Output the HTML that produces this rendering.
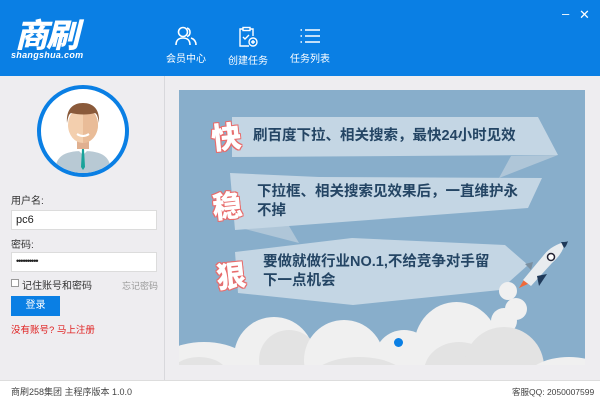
<!DOCTYPE html>
<html><head><meta charset="utf-8"><style>
*{margin:0;padding:0;box-sizing:border-box}
body{width:600px;height:405px;overflow:hidden;background:#eeedf0;font-family:"Liberation Sans","Noto Sans CJK SC",sans-serif;position:relative;font-size:12px}
.hdr{position:absolute;left:0;top:0;width:600px;height:76px;background:#0a7fe4}
.logo{position:absolute;left:15px;top:14px;color:#fff;font-size:33px;font-weight:900;font-style:italic;letter-spacing:-2px;line-height:38px;font-family:"Noto Sans CJK SC",sans-serif}
.logo2{position:absolute;left:11px;top:50px;color:#fff;font-size:9px;font-style:italic;font-weight:bold;letter-spacing:0.3px}
.nav{position:absolute;top:26px;width:60px;text-align:center;color:#fff;font-size:10px;white-space:nowrap}
.nav svg{display:block;margin:0 auto 4px}
.wc{position:absolute;color:#fff;font-size:13px}
.left{position:absolute;left:0;top:76px;width:165px;height:304px;border-right:1px solid #d8d8dc}
.av{position:absolute;left:37px;top:9px;width:92px;height:92px;border-radius:50%;border:4px solid #0a7fe4;background:#fff;overflow:hidden}
.lbl{position:absolute;left:11px;font-size:10px;color:#333;white-space:nowrap}
.inp{position:absolute;left:11px;width:146px;height:20px;background:#fff;border:1px solid #dcdcdc;font-size:11px;padding:3px 4px;color:#222}
.btn{position:absolute;left:11px;width:49px;height:20px;background:#0a7fe4;color:#fff;font-size:10px;text-align:center;line-height:20px}
.ban{position:absolute;left:179px;top:90px;width:406px;height:275px;background:#88aecb;overflow:hidden}
.rib{position:absolute;left:0;top:0;width:406px;height:275px;background:#c4d6e4}
.big{position:absolute;font-size:30px;font-weight:900;color:#fff;font-family:"Noto Sans CJK SC",sans-serif;line-height:32px;text-shadow:1px 0 #e76d6d,-1px 0 #e76d6d,0 1px #e76d6d,0 -1px #e76d6d,1px 1px #e76d6d,-1px -1px #e76d6d,1px -1px #e76d6d,-1px 1px #e76d6d;transform:rotate(-6deg)}
.t{position:absolute;color:#244564;font-size:14.5px;font-weight:bold;line-height:19px;white-space:nowrap}
.foot{position:absolute;left:0;top:380px;width:600px;height:25px;background:#fff;border-top:1px solid #ddd;font-size:9px;color:#444;line-height:22px;white-space:nowrap}
.cl{position:absolute;border-radius:50%;background:#f0f0f0}
.cd{position:absolute;border-radius:50%;background:#e3e3e3}
.cg{position:absolute;left:0;top:12px;width:406px;height:275px}
</style></head><body>
<div class="hdr">
<div class="logo">商刷</div>
<div class="logo2">shangshua.com</div>
<div class="nav" style="left:156px"><svg width="22" height="20" viewBox="0 0 22 20" fill="none" stroke="#fff" stroke-width="1.6"><circle cx="8" cy="6" r="4.5"/><path d="M1 19c0-5 3-7 7-7s7 2 7 7"/><path d="M12 2a4.5 4.5 0 0 1 0 8.5M16 12c3 1 5 3 5 7"/></svg>会员中心</div>
<div class="nav" style="left:218px"><svg width="22" height="22" viewBox="0 0 22 22" fill="none" stroke="#fff" stroke-width="1.4"><path d="M6 3H3v17h9M13 3h3v7"/><rect x="6" y="1.5" width="7" height="3"/><path d="M6 11l2 2 4-4"/><circle cx="16" cy="16" r="4"/><path d="M16 14v4M14 16h4"/></svg>创建任务</div>
<div class="nav" style="left:280px"><svg width="22" height="20" viewBox="0 0 22 20" fill="none" stroke="#fff" stroke-width="1.6"><path d="M6 4h15M6 10h15M6 16h15"/><path d="M1.5 4h1.5M1.5 10h1.5M1.5 16h1.5"/></svg>任务列表</div>
<div class="wc" style="left:562px;top:6px">–</div>
<div class="wc" style="left:579px;top:7px">✕</div>
</div>
<div class="left">
<div class="av"><svg width="84" height="84" viewBox="0 0 84 84">
<path d="M14 84c0-16 8-22 28-22s28 6 28 22z" fill="#b8c9d4"/>
<path d="M34 58h16l-8 8z" fill="#fff"/><path d="M41 60h2l1 18-2 3-2-3z" fill="#1aa39a"/>
<rect x="36" y="50" width="12" height="10" fill="#e0b090"/>
<ellipse cx="42" cy="36" rx="15" ry="18" fill="#f3cfae"/><path d="M42 18v36c8 0 15-8 15-18s-7-18-15-18z" fill="#e9bc98"/>
<path d="M26 34c-1-14 6-20 16-20s17 6 16 20c-1-6-2-9-4-10-6 2-16 2-24 0-2 1-3 4-4 10z" fill="#8a5a3a"/>
<path d="M36 45q6 4 12 0" stroke="#fff" stroke-width="2" fill="none"/></svg></div>
<div class="lbl" style="top:116px">用户名:</div>
<div class="inp" style="top:134px">pc6</div>
<div class="lbl" style="top:160px">密码:</div>
<div class="inp" style="top:176px;font-size:9px;letter-spacing:-1px">••••••••••</div>
<div style="position:absolute;left:11px;top:203px;width:8px;height:8px;border:1px solid #999;background:#fff"></div>
<div class="lbl" style="left:22px;top:201px">记住账号和密码</div>
<div class="lbl" style="left:122px;top:203px;color:#999;font-size:9px">忘记密码</div>
<div class="btn" style="top:220px">登录</div>
<div class="lbl" style="top:246px;color:#e02020;font-size:9.5px">没有账号? 马上注册</div>
</div>
<div class="ban">
<div class="rib" style="background:#afc6d8;clip-path:polygon(379px 65px,320px 88px,332px 66px)"></div>
<div class="rib" style="clip-path:polygon(53px 27px,359px 27px,379px 65px,53px 67px)"></div>
<div class="rib" style="background:#afc6d8;clip-path:polygon(62px 138px,110px 136px,120px 153px)"></div>
<div class="rib" style="clip-path:polygon(51px 83px,140px 87px,363px 88px,349px 118px,56px 140px)"></div>
<div class="rib" style="clip-path:polygon(56px 162px,173px 148px,326px 155px,349px 175px,321px 200px,174px 215px,59px 203px)"></div>
<div class="big" style="left:32px;top:29px">快</div>
<div class="big" style="left:33px;top:98px">稳</div>
<div class="big" style="left:37px;top:168px">狠</div>
<div class="t" style="left:74px;top:37px">刷百度下拉、相关搜索，最快24小时见效</div>
<div class="t" style="left:78px;top:93px">下拉框、相关搜索见效果后，一直维护永<br>不掉</div>
<div class="t" style="left:84px;top:163px">要做就做行业NO.1,不给竞争对手留<br>下一点机会</div>
<div class="cg">
<div class="cl" style="left:326px;top:196px;width:22px;height:22px"></div>
<div class="cl" style="left:320px;top:180px;width:18px;height:18px"></div>
<div class="cl" style="left:312px;top:206px;width:26px;height:26px"></div>
<div class="cl" style="left:-30px;top:240px;width:110px;height:70px"></div>
<div class="cd" style="left:-10px;top:255px;width:60px;height:40px"></div>
<div class="cl" style="left:55px;top:215px;width:80px;height:80px"></div>
<div class="cd" style="left:80px;top:228px;width:60px;height:60px"></div>
<div class="cl" style="left:125px;top:218px;width:80px;height:80px"></div>
<div class="cl" style="left:195px;top:228px;width:60px;height:60px"></div>
<div class="cl" style="left:235px;top:200px;width:85px;height:90px"></div>
<div class="cd" style="left:245px;top:240px;width:70px;height:60px"></div>
<div class="cd" style="left:285px;top:225px;width:80px;height:80px"></div>
<div class="cl" style="left:345px;top:255px;width:90px;height:50px"></div>
<div class="cd" style="left:130px;top:255px;width:100px;height:50px"></div>
</div>
<svg style="position:absolute;left:336px;top:148px" width="56" height="52" viewBox="0 0 56 52"><path d="M10 40l-6 10 11-5z" fill="#f06a3a"/><path d="M8 42l20-24c6-8 14-12 22-14-1 7-5 14-13 21L16 48z" fill="#e8ecef"/><path d="M46 4c3 0 6 0 7-1-1 3-2 6-4 7z" fill="#1f3a5a"/><circle cx="36" cy="19" r="3.5" fill="#fff" stroke="#223" stroke-width="1.5"/><path d="M22 38l10-2-8 12z" fill="#1f3a5a"/><path d="M18 24l-8 2 6 6z" fill="#7a8fa0"/></svg>
<div style="position:absolute;left:215px;top:248px;width:9px;height:9px;border-radius:50%;background:#0a7fe4"></div>
</div>
<div class="foot"><span style="position:absolute;left:11px">商刷258集团 主程序版本 1.0.0</span><span style="position:absolute;left:512px;font-size:8.5px">客服QQ: 2050007599</span></div>
</body></html>
